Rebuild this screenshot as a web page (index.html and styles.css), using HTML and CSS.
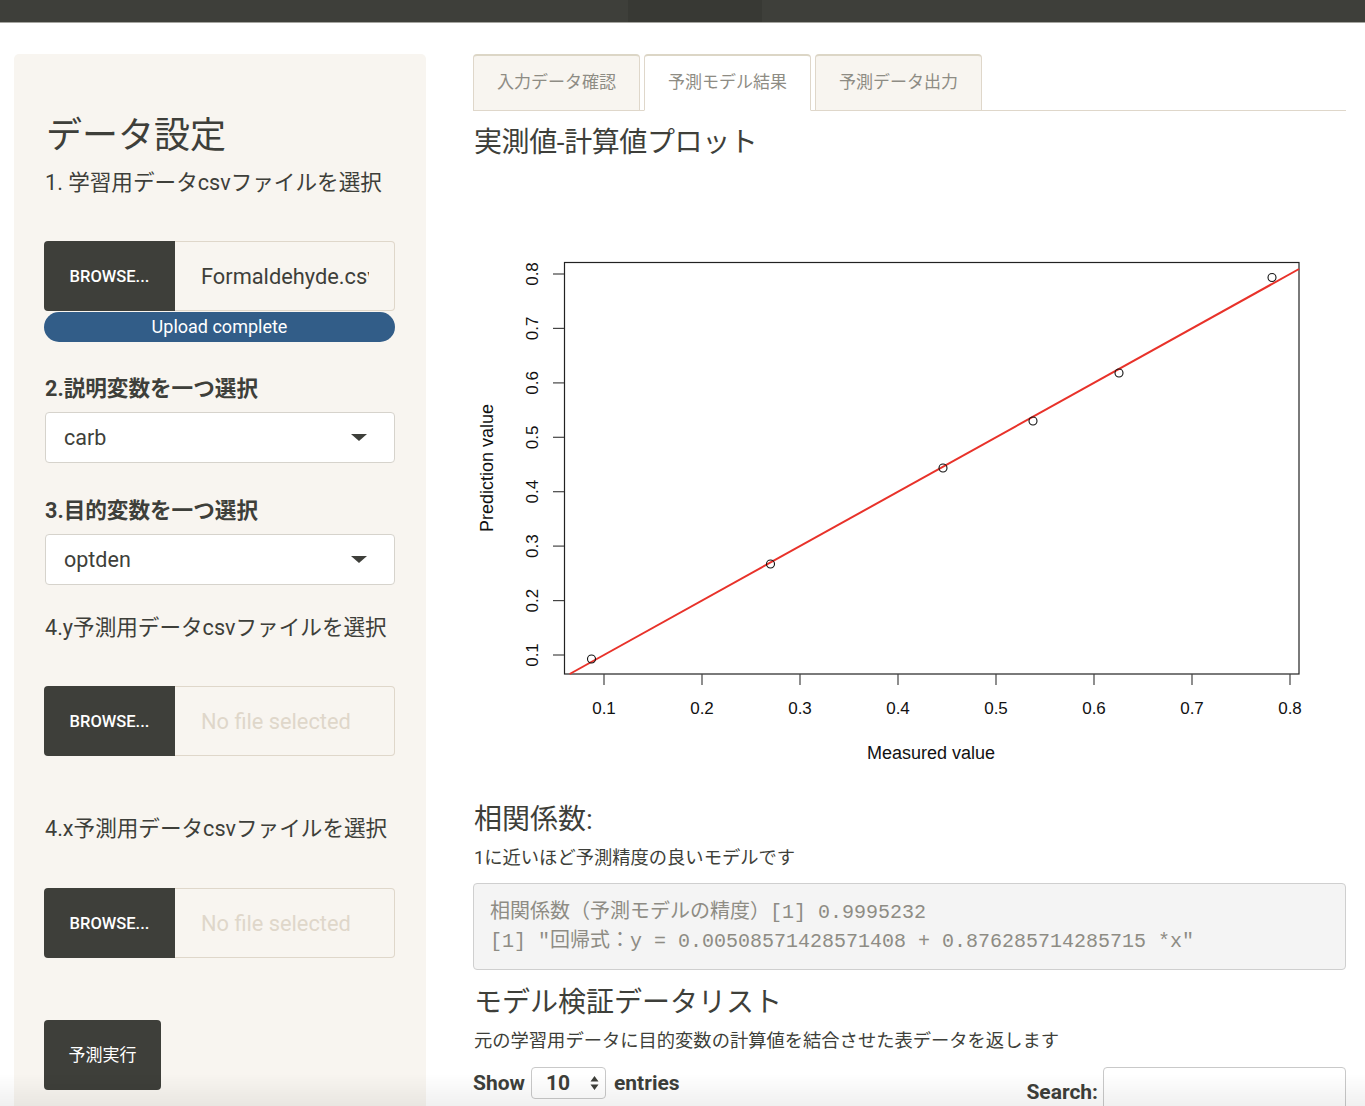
FILE: index.html
```html
<!DOCTYPE html>
<html lang="ja">
<head>
<meta charset="utf-8">
<title>予測モデル</title>
<link rel="stylesheet" href="styles.css">
</head>
<body>
<nav class="navbar"><span class="nav-active"></span></nav>
<div class="page">
  <aside class="well">
    <h2 class="well-title">データ設定</h2>
    <label class="lbl lbl-1">1. 学習用データcsvファイルを選択</label>
    <div class="file file-1">
      <span class="browse">BROWSE...</span>
      <span class="fname"><span class="fname-text">Formaldehyde.csv</span></span>
    </div>
    <div class="progress">Upload complete</div>
    <label class="lbl lbl-bold lbl-2">2.説明変数を一つ選択</label>
    <div class="select"><span>carb</span><i class="caret"></i></div>
    <label class="lbl lbl-bold lbl-3">3.目的変数を一つ選択</label>
    <div class="select"><span>optden</span><i class="caret"></i></div>
    <label class="lbl lbl-4">4.y予測用データcsvファイルを選択</label>
    <div class="file file-2">
      <span class="browse">BROWSE...</span>
      <span class="fname empty"><span class="fname-text">No file selected</span></span>
    </div>
    <label class="lbl lbl-5">4.x予測用データcsvファイルを選択</label>
    <div class="file file-3">
      <span class="browse">BROWSE...</span>
      <span class="fname empty"><span class="fname-text">No file selected</span></span>
    </div>
    <button class="run">予測実行</button>
  </aside>

  <main class="main">
    <ul class="tabs">
      <li class="tab">入力データ確認</li>
      <li class="tab active">予測モデル結果</li>
      <li class="tab">予測データ出力</li>
    </ul>
    <h3 class="h-plot">実測値-計算値プロット</h3>
    <svg class="plot" width="873" height="625" viewBox="473 160 873 625" xmlns="http://www.w3.org/2000/svg">
      <rect x="564.5" y="262.5" width="734.5" height="411.5" fill="#fff" stroke="#222" stroke-width="1.2"/>
      <g stroke="#444" stroke-width="1.2">
        <line x1="604" y1="674" x2="604" y2="685"/>
        <line x1="702" y1="674" x2="702" y2="685"/>
        <line x1="800" y1="674" x2="800" y2="685"/>
        <line x1="898" y1="674" x2="898" y2="685"/>
        <line x1="996" y1="674" x2="996" y2="685"/>
        <line x1="1094" y1="674" x2="1094" y2="685"/>
        <line x1="1192" y1="674" x2="1192" y2="685"/>
        <line x1="1290" y1="674" x2="1290" y2="685"/>
        <line x1="553" y1="655" x2="564" y2="655"/>
        <line x1="553" y1="600.6" x2="564" y2="600.6"/>
        <line x1="553" y1="546.1" x2="564" y2="546.1"/>
        <line x1="553" y1="491.7" x2="564" y2="491.7"/>
        <line x1="553" y1="437.3" x2="564" y2="437.3"/>
        <line x1="553" y1="382.9" x2="564" y2="382.9"/>
        <line x1="553" y1="328.4" x2="564" y2="328.4"/>
        <line x1="553" y1="274" x2="564" y2="274"/>
      </g>
      <g class="ptxt" text-anchor="middle" font-size="17">
        <text x="604" y="714">0.1</text>
        <text x="702" y="714">0.2</text>
        <text x="800" y="714">0.3</text>
        <text x="898" y="714">0.4</text>
        <text x="996" y="714">0.5</text>
        <text x="1094" y="714">0.6</text>
        <text x="1192" y="714">0.7</text>
        <text x="1290" y="714">0.8</text>
        <text x="538" y="655" transform="rotate(-90 538 655)">0.1</text>
        <text x="538" y="600.6" transform="rotate(-90 538 600.6)">0.2</text>
        <text x="538" y="546.1" transform="rotate(-90 538 546.1)">0.3</text>
        <text x="538" y="491.7" transform="rotate(-90 538 491.7)">0.4</text>
        <text x="538" y="437.3" transform="rotate(-90 538 437.3)">0.5</text>
        <text x="538" y="382.9" transform="rotate(-90 538 382.9)">0.6</text>
        <text x="538" y="328.4" transform="rotate(-90 538 328.4)">0.7</text>
        <text x="538" y="274" transform="rotate(-90 538 274)">0.8</text>
      </g>
      <g class="ptxt" text-anchor="middle" font-size="18">
        <text x="931" y="759">Measured value</text>
        <text x="493" y="468" transform="rotate(-90 493 468)">Prediction value</text>
      </g>
      <line x1="569.7" y1="674" x2="1299" y2="269" stroke="#e8322a" stroke-width="2"/>
      <g fill="none" stroke="#111" stroke-width="1.1">
        <circle cx="591.5" cy="659" r="4"/>
        <circle cx="770.5" cy="564" r="4"/>
        <circle cx="943" cy="468" r="4"/>
        <circle cx="1033" cy="421" r="4"/>
        <circle cx="1119" cy="373" r="4"/>
        <circle cx="1272" cy="277.5" r="4"/>
      </g>
    </svg>
    <h3 class="h-corr">相関係数:</h3>
    <p class="note note-1">1に近いほど予測精度の良いモデルです</p>
    <pre class="out">相関係数（予測モデルの精度）[1] 0.9995232
[1] "回帰式：y = 0.00508571428571408 + 0.876285714285715 *x"</pre>
    <h3 class="h-list">モデル検証データリスト</h3>
    <p class="note note-2">元の学習用データに目的変数の計算値を結合させた表データを返します</p>
    <div class="dt-controls">
      <div class="dt-length">
        <span>Show</span>
        <span class="dt-select">10
          <svg class="updown" width="9" height="16" viewBox="0 0 9 16"><path d="M4.5 1 L8.5 6.5 H0.5 Z M4.5 15 L8.5 9.5 H0.5 Z" fill="#3e3f3a"/></svg>
        </span>
        <span>entries</span>
      </div>
      <div class="dt-search">
        <span>Search:</span>
        <span class="dt-input"></span>
      </div>
    </div>
  </main>
</div>
<div class="fade"></div>
</body>
</html>
```

FILE: styles.css
```css
html, body {
  margin: 0;
  padding: 0;
}
body {
  font-family: Roboto, "Noto Sans CJK JP", sans-serif;
  color: #3e3f3a;
  background: #fff;
  overflow: hidden;
}

.navbar {
  height: 22px;
  background: #3e3f3a;
  border-bottom: 1px solid #a5a5a0;
  display: flex;
}
.nav-active {
  margin-left: 628px;
  width: 134px;
  background: #383934;
}

.page {
  display: flex;
  align-items: flex-start;
  padding: 31px 19px 0 14px;
}

/* ---------- sidebar ---------- */
.well {
  width: 412px;
  flex: none;
  box-sizing: border-box;
  background: #f8f5f0;
  border-radius: 5px;
  padding: 62px 31px 60px 30px;
}
.well-title {
  margin: 0;
  font-size: 36px;
  line-height: 40px;
  font-weight: 400;
  padding-left: 2px;
}
.lbl {
  display: block;
  font-size: 21.6px;
  line-height: 30px;
  padding-left: 1px;
  white-space: nowrap;
}
.lbl-bold { font-weight: 700; }
.lbl-1 { margin-top: 12px; }
.lbl-2 { margin-top: 32px; }
.lbl-3 { margin-top: 33px; }
.lbl-4 { margin-top: 28px; }
.lbl-5 { margin-top: 58px; }

.file {
  display: flex;
  height: 70px;
  margin-top: 43px;
}
.file-3 { margin-top: 44px; }
.browse {
  width: 131px;
  flex: none;
  background: #3e3f3a;
  color: #fff;
  border-radius: 4px 0 0 4px;
  display: flex;
  align-items: center;
  justify-content: center;
  font-size: 16.5px;
  font-weight: 500;
}
.fname {
  flex: 1;
  min-width: 0;
  box-sizing: border-box;
  border: 1px solid #dfd7ca;
  border-left: none;
  border-radius: 0 4px 4px 0;
  padding: 0 25px 0 26px;
  font-size: 21.8px;
  display: flex;
  align-items: center;
}
.fname-text {
  min-width: 0;
  white-space: nowrap;
  overflow: hidden;
}
.fname.empty { color: #dfd7ca; }

.progress {
  margin-top: 1px;
  height: 30px;
  border-radius: 15px;
  background: #325d88;
  color: #fff;
  font-size: 18px;
  line-height: 30px;
  text-align: center;
}

.select {
  margin-top: 8px;
  margin-left: 1px;
  height: 51px;
  box-sizing: border-box;
  background: #fff;
  border: 1px solid #d6d3cc;
  border-radius: 4px;
  padding: 0 27px 0 18px;
  display: flex;
  align-items: center;
  justify-content: space-between;
  font-size: 21.5px;
}
.caret {
  width: 0;
  height: 0;
  border-left: 8px solid transparent;
  border-right: 8px solid transparent;
  border-top: 7px solid #3e3f3a;
}

.run {
  display: block;
  margin-top: 62px;
  width: 117px;
  height: 70px;
  border: none;
  border-radius: 4px;
  background: #3e3f3a;
  color: #fff;
  font-family: Roboto, "Noto Sans CJK JP", sans-serif;
  font-size: 17px;
  padding: 0 0 4px;
}

/* ---------- main ---------- */
.main {
  flex: 1;
  min-width: 0;
  margin-left: 47px;
}
.tabs {
  list-style: none;
  margin: 0;
  padding: 0;
  display: flex;
  height: 56px;
  border-bottom: 1px solid #dfd7ca;
}
.tab {
  box-sizing: border-box;
  height: 57px;
  margin-right: 4px;
  padding: 0 23px 5px;
  background: #f8f5f0;
  border: 1px solid #dfd7ca;
  border-top: 2px solid #dcd6c6;
  border-radius: 4px 4px 0 0;
  color: #8e8c84;
  font-size: 17px;
  display: flex;
  align-items: center;
}
.tab.active {
  background: #fff;
  border-bottom-color: #fff;
}

h3 {
  margin: 0;
  font-size: 28px;
  line-height: 34px;
  font-weight: 400;
  padding-left: 1px;
}
.h-plot { margin-top: 15px; letter-spacing: -0.4px; }
.h-corr { margin-top: 18px; }
.h-list { margin-top: 16px; }

.plot { display: block; }
.ptxt { font-family: "Liberation Sans", Arial, sans-serif; fill: #111; }

.note {
  margin: 8px 0 0;
  font-size: 18.3px;
  line-height: 26px;
  padding-left: 1px;
}

.out {
  margin: 12px 0 0;
  padding: 14px 16px 13px;
  background: #f4f4f4;
  border: 1px solid #cfcfcf;
  border-radius: 4px;
  color: #8e8c84;
  font-family: "Liberation Mono", "Noto Sans CJK JP", monospace;
  font-size: 20px;
  line-height: 29px;
  white-space: pre;
  overflow: hidden;
}

.dt-controls {
  margin-top: 13px;
  display: flex;
  justify-content: space-between;
  align-items: flex-start;
  font-size: 21px;
  font-weight: 700;
}
.dt-length {
  display: flex;
  align-items: center;
  gap: 6px;
  height: 32px;
}
.dt-length span:last-child { margin-left: 2px; }
.dt-select {
  box-sizing: border-box;
  width: 75px;
  height: 32px;
  border: 1px solid #c9c9c9;
  border-radius: 4px;
  background: #fff;
  display: flex;
  align-items: center;
  justify-content: space-between;
  padding: 0 6px 0 14px;
}
.dt-search {
  display: flex;
  align-items: center;
  gap: 5px;
}
.dt-search span:first-child { margin-top: 4px; }
.dt-input {
  width: 243px;
  height: 46px;
  box-sizing: border-box;
  border: 1px solid #c9c9c9;
  border-radius: 4px;
  background: #fff;
}

.fade {
  position: fixed;
  left: 0;
  right: 0;
  bottom: 0;
  height: 32px;
  background: linear-gradient(rgba(0,0,0,0), rgba(0,0,0,0.06));
  pointer-events: none;
}
```
